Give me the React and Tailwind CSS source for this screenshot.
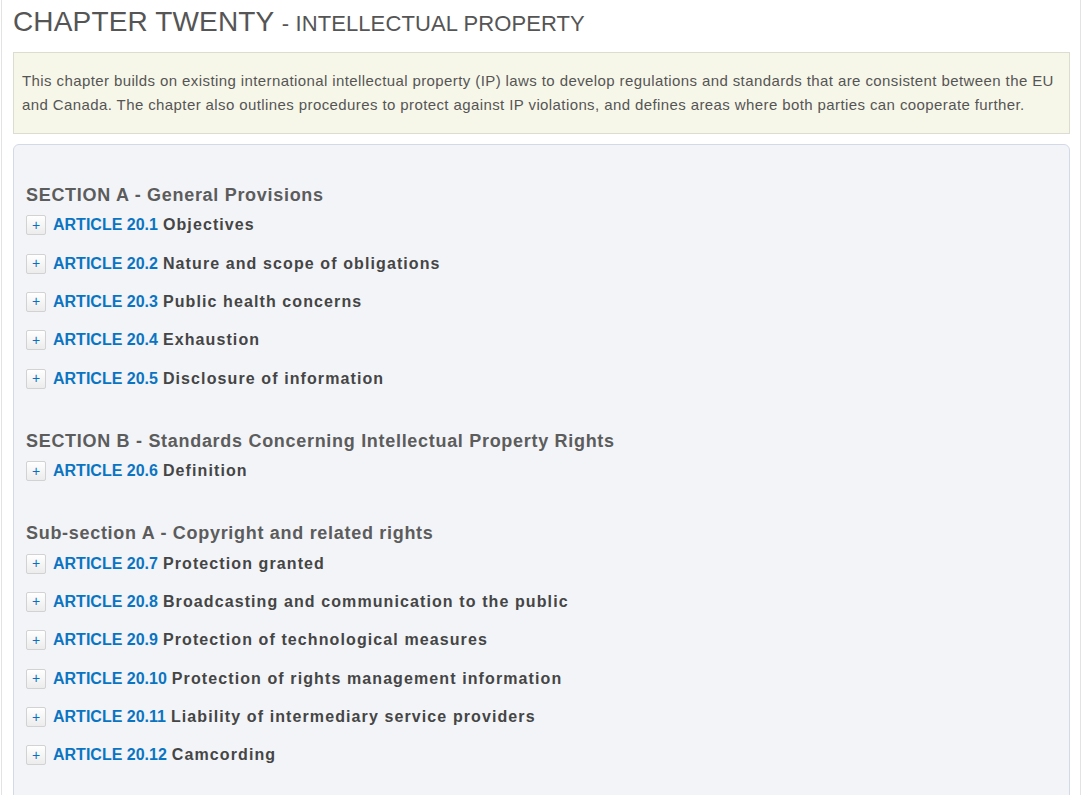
import React from "react";

const groups = [
  {
    header: "SECTION A - General Provisions",
    items: [
      ["20.1", "Objectives"],
      ["20.2", "Nature and scope of obligations"],
      ["20.3", "Public health concerns"],
      ["20.4", "Exhaustion"],
      ["20.5", "Disclosure of information"],
    ],
  },
  {
    header: "SECTION B - Standards Concerning Intellectual Property Rights",
    items: [["20.6", "Definition"]],
  },
  {
    header: "Sub-section A - Copyright and related rights",
    items: [
      ["20.7", "Protection granted"],
      ["20.8", "Broadcasting and communication to the public"],
      ["20.9", "Protection of technological measures"],
      ["20.10", "Protection of rights management information"],
      ["20.11", "Liability of intermediary service providers"],
      ["20.12", "Camcording"],
    ],
  },
];

function Row({ num, title }) {
  return (
    <div className="flex h-[38.4px] items-center">
      <button className="flex h-[20px] w-[20px] items-center justify-center rounded-[2px] border border-[#d2d2d2] bg-gradient-to-b from-white to-[#ececec] pb-[1px] text-[14px] leading-none text-[#0b6fc0]">
        +
      </button>
      <span className="ml-[7px] text-[16px] font-bold text-[#0b74c2]">ARTICLE {num}</span>
      <span className="ml-[5px] text-[16px] font-bold tracking-[1.1px] text-[#454545]">{title}</span>
    </div>
  );
}

export default function App() {
  return (
    <div
      className="min-h-[795px] bg-white"
      style={{ fontFamily: '"Liberation Sans", Arial, sans-serif' }}
    >
      <div className="ml-[1px] min-h-[795px] w-[1080px] border-x border-[#e3e3e3] pl-[11px] pr-[10px]">
        <h1 className="pt-[6px] text-[#555] leading-[32px]">
          <span className="text-[28px] tracking-[0.15px]">CHAPTER TWENTY </span>
          <span className="text-[22px] tracking-[0.1px]">- INTELLECTUAL PROPERTY</span>
        </h1>
        <div className="mt-[10px] border border-[#dcdcd0] bg-[#f7f7e9] px-[8px] py-[16px] text-[15px] leading-[24px] tracking-[0.4px] text-[#555]">
          This chapter builds on existing international intellectual property (IP) laws to develop regulations and standards that are consistent between the EU and Canada. The chapter also outlines procedures to protect against IP violations, and defines areas where both parties can cooperate further.
        </div>
        <div className="mt-[10px] min-h-[700px] rounded-t-[6px] border border-[#d3d9e6] bg-[#f2f4f8] px-[12px] pt-[40px]">
          {groups.map((g, i) => (
            <div key={i} className={i === 0 ? "" : "mt-[33px]"}>
              <div className="mb-[1px] text-[18px] font-bold leading-[20px] tracking-[0.7px] text-[#5c5c5c]">
                {g.header}
              </div>
              {g.items.map(([n, t]) => (
                <Row key={n} num={n} title={t} />
              ))}
            </div>
          ))}
        </div>
      </div>
    </div>
  );
}
